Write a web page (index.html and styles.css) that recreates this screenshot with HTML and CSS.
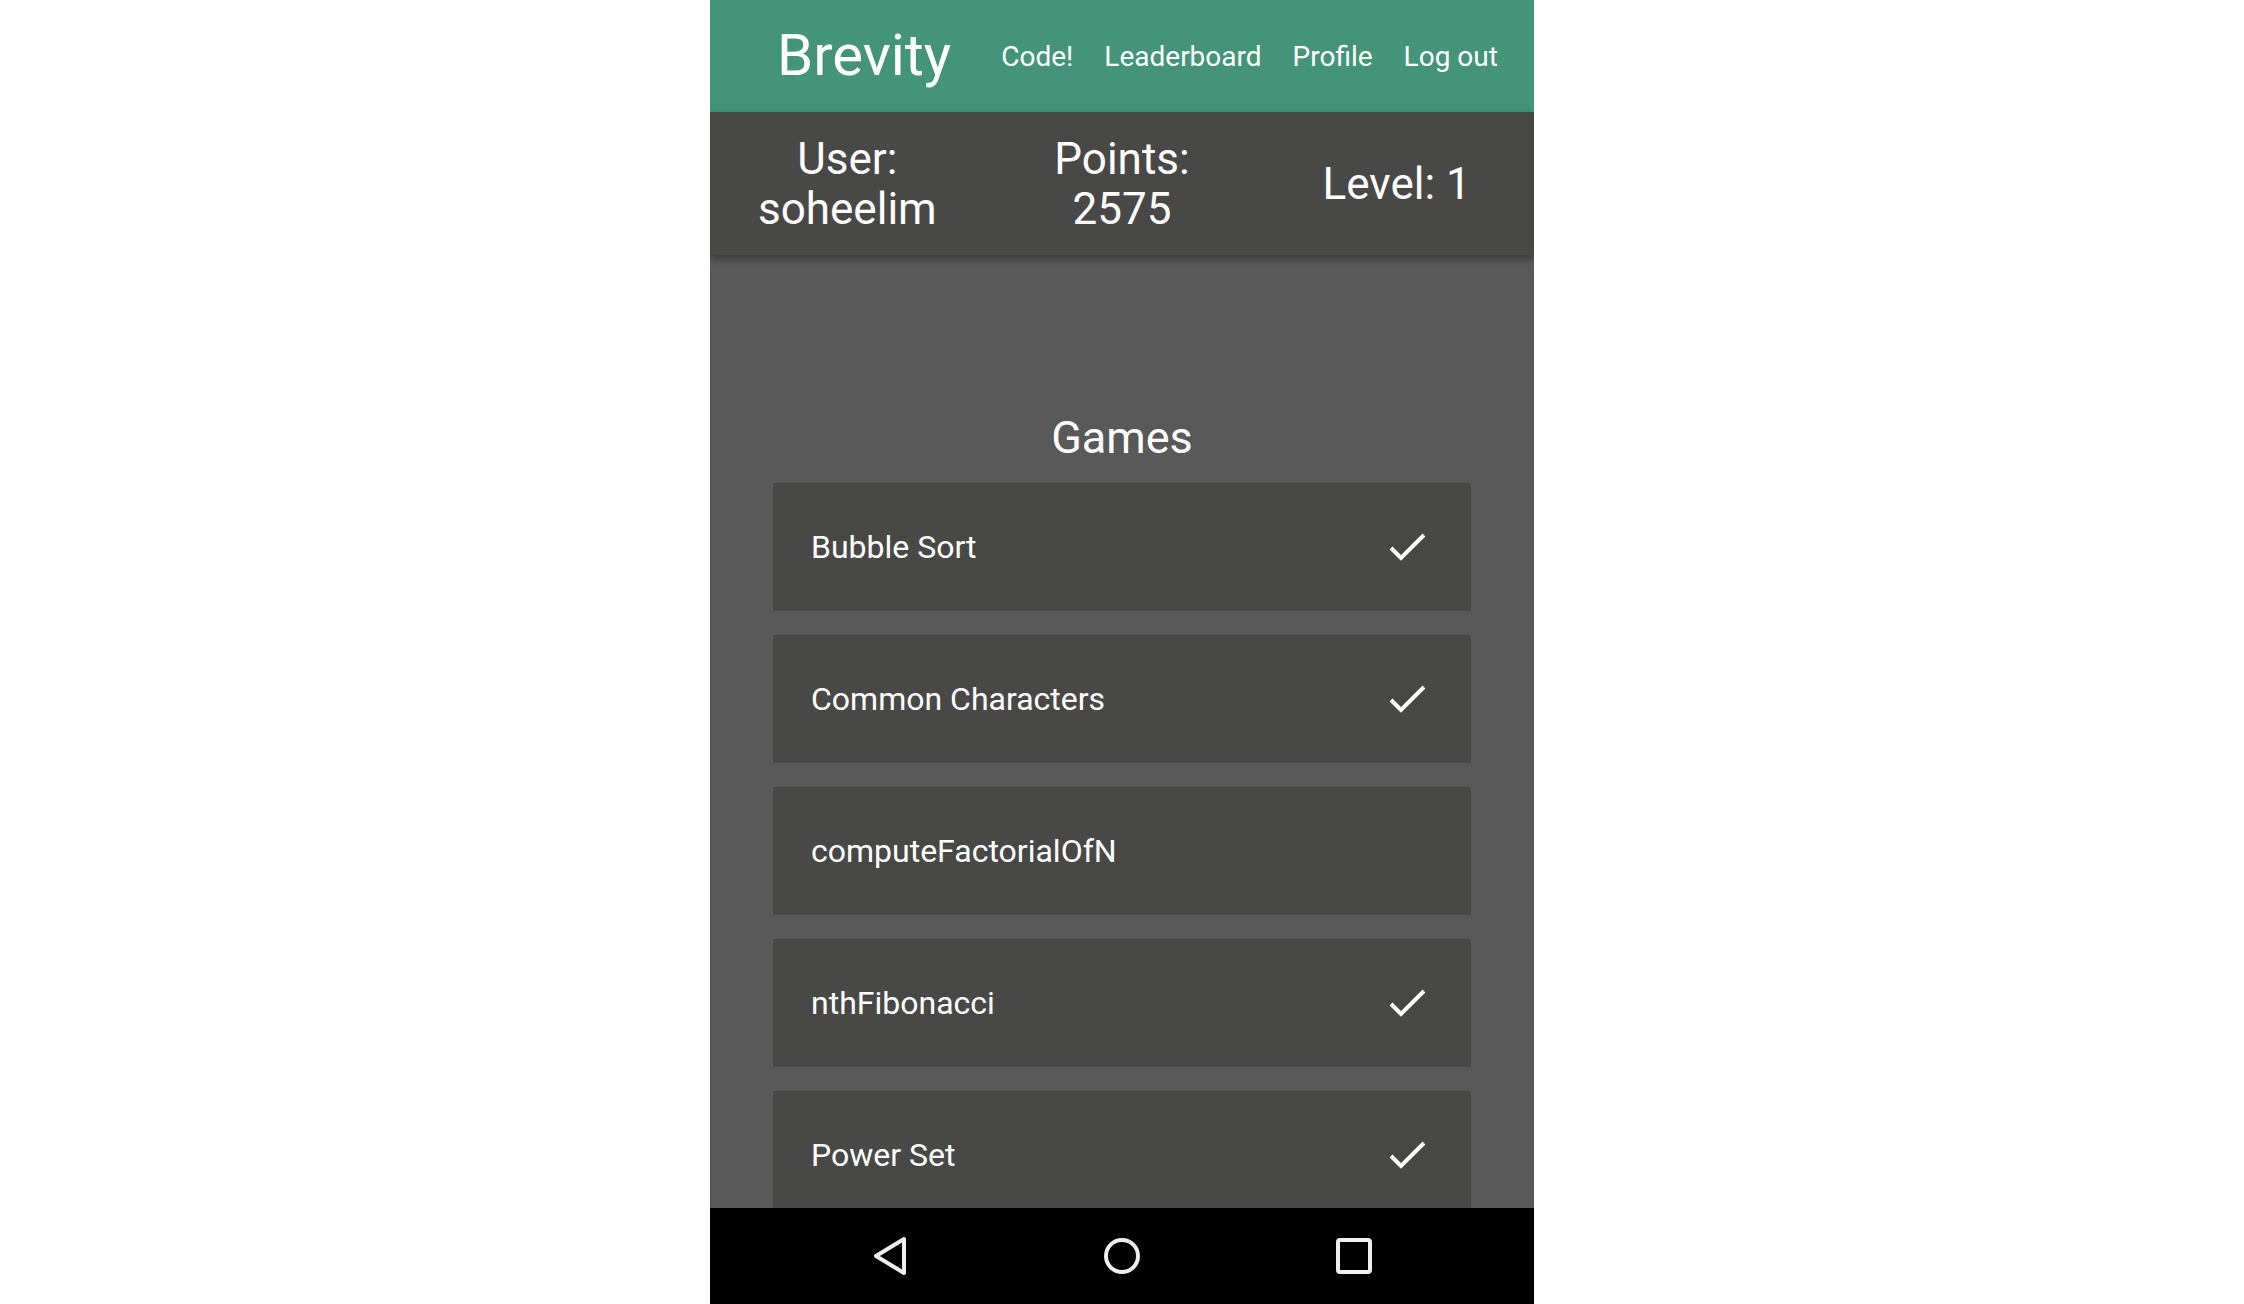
FILE: index.html
```html
<!DOCTYPE html>
<html>
<head>
<meta charset="utf-8">
<title>Brevity</title>
<link rel="stylesheet" href="styles.css">
</head>
<body>
<div class="phone">
  <header class="topbar">
    <div class="brand">Brevity</div>
    <nav class="links">
      <a class="link">Code!</a>
      <a class="link">Leaderboard</a>
      <a class="link">Profile</a>
      <a class="link">Log out</a>
    </nav>
  </header>
  <section class="stats">
    <div class="stat">User:<br>soheelim</div>
    <div class="stat">Points:<br>2575</div>
    <div class="stat">Level: 1</div>
  </section>
  <main class="content">
    <h2 class="title">Games</h2>
    <ul class="games">
      <li class="game"><span>Bubble Sort</span><svg class="check" viewBox="0 0 38 30" width="38" height="30"><path d="M2 16 L12 26 L35 3" /></svg></li>
      <li class="game"><span>Common Characters</span><svg class="check" viewBox="0 0 38 30" width="38" height="30"><path d="M2 16 L12 26 L35 3" /></svg></li>
      <li class="game"><span>computeFactorialOfN</span></li>
      <li class="game"><span>nthFibonacci</span><svg class="check" viewBox="0 0 38 30" width="38" height="30"><path d="M2 16 L12 26 L35 3" /></svg></li>
      <li class="game"><span>Power Set</span><svg class="check" viewBox="0 0 38 30" width="38" height="30"><path d="M2 16 L12 26 L35 3" /></svg></li>
    </ul>
  </main>
  <footer class="navbar">
    <svg class="navicon" viewBox="0 0 40 40" width="40" height="40"><path d="M34 3 L6 20 L34 37 Z" /></svg>
    <svg class="navicon" viewBox="0 0 40 40" width="40" height="40"><circle cx="20" cy="20" r="16" /></svg>
    <svg class="navicon" viewBox="0 0 40 40" width="40" height="40"><rect x="4" y="4" width="32" height="32" rx="2" /></svg>
  </footer>
</div>
</body>
</html>
```
FILE: styles.css
```css
html, body {
  margin: 0;
  padding: 0;
  background: #ffffff;
}
body {
  font-family: Roboto, "Noto Sans", sans-serif;
  color: #ffffff;
}
.phone {
  width: 824px;
  height: 1304px;
  margin: 0 auto;
  display: flex;
  flex-direction: column;
  background: #595959;
  overflow: hidden;
}
.topbar {
  height: 112px;
  flex: none;
  background: #44947a;
  display: flex;
  align-items: center;
  padding: 0 33px 0 67px;
}
.brand {
  font-size: 58px;
  line-height: 1;
  margin-right: 50px;
  padding-bottom: 2px;
}
.links {
  display: flex;
  gap: 31px;
}
.link {
  font-size: 28px;
  color: #ffffff;
  text-decoration: none;
}
.stats {
  height: 143px;
  flex: none;
  background: #484947;
  display: grid;
  grid-template-columns: 1fr 1fr 1fr;
  align-items: center;
  text-align: center;
  font-size: 44px;
  line-height: 50px;
  position: relative;
  z-index: 1;
  box-shadow: 0 4px 8px rgba(0, 0, 0, 0.35);
}
.content {
  flex: 1;
  overflow: hidden;
  padding: 0 63px;
}
.title {
  margin: 158px 0 20px;
  text-align: center;
  font-weight: 400;
  font-size: 45px;
  line-height: 50px;
  height: 50px;
}
.games {
  list-style: none;
  margin: 0;
  padding: 0;
  display: flex;
  flex-direction: column;
  gap: 24px;
}
.game {
  height: 128px;
  flex: none;
  background: #484946;
  display: flex;
  align-items: center;
  justify-content: space-between;
  padding: 0 44px 0 38px;
  font-size: 32px;
}
.check {
  fill: none;
  stroke: #ffffff;
  stroke-width: 4;
}
.navbar {
  height: 96px;
  flex: none;
  background: #000000;
  display: flex;
  align-items: center;
  justify-content: center;
  gap: 192px;
}
.navicon {
  fill: none;
  stroke: #eeeeee;
  stroke-width: 4;
  stroke-linejoin: round;
}
```
